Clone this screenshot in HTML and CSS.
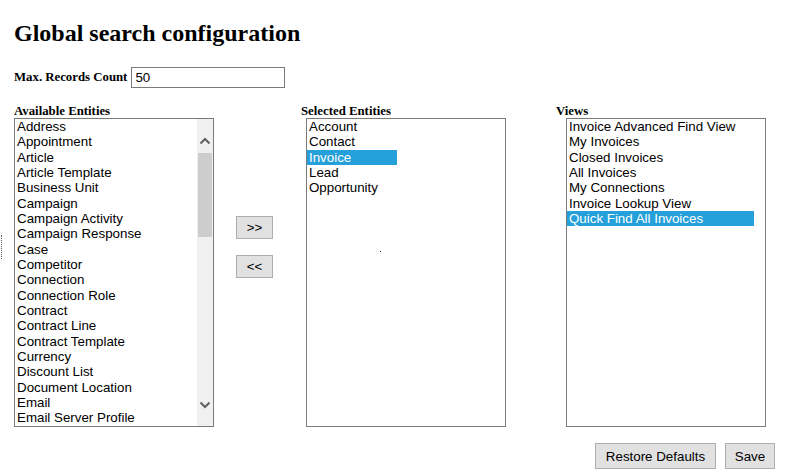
FILE: index.html
```html
<!DOCTYPE html>
<html>
<head>
<meta charset="utf-8">
<title>Global search configuration</title>
<link rel="stylesheet" href="styles.css">
</head>
<body>
<div class="focus-mark"></div>
<div class="page">
  <h1 class="title">Global search configuration</h1>
  <div class="count-row">
    <label class="field-label" for="maxcount">Max. Records Count</label>
    <input id="maxcount" class="text-input" type="text" value="50">
  </div>
  <div class="lists">
    <div class="col">
      <div class="caption">Available Entities</div>
      <div class="listbox listbox-scroll">
        <div class="items">
          <div class="item">Address</div>
          <div class="item">Appointment</div>
          <div class="item">Article</div>
          <div class="item">Article Template</div>
          <div class="item">Business Unit</div>
          <div class="item">Campaign</div>
          <div class="item">Campaign Activity</div>
          <div class="item">Campaign Response</div>
          <div class="item">Case</div>
          <div class="item">Competitor</div>
          <div class="item">Connection</div>
          <div class="item">Connection Role</div>
          <div class="item">Contract</div>
          <div class="item">Contract Line</div>
          <div class="item">Contract Template</div>
          <div class="item">Currency</div>
          <div class="item">Discount List</div>
          <div class="item">Document Location</div>
          <div class="item">Email</div>
          <div class="item">Email Server Profile</div>
        </div>
        <div class="scrollbar">
          <svg class="chev" width="12" height="14" viewBox="0 0 12 14"><polyline points="1.5,9.5 6,5 10.5,9.5" fill="none" stroke="#606060" stroke-width="2"/></svg>
          <div class="thumb"></div>
          <div class="track-fill"></div>
          <svg class="chev" width="12" height="14" viewBox="0 0 12 14"><polyline points="1.5,4.5 6,9 10.5,4.5" fill="none" stroke="#606060" stroke-width="2"/></svg>
        </div>
      </div>
    </div>
    <div class="movers">
      <button class="btn btn-move" type="button">&gt;&gt;</button>
      <button class="btn btn-move" type="button">&lt;&lt;</button>
    </div>
    <div class="col col-selected">
      <div class="caption">Selected Entities</div>
      <div class="listbox listbox-selected">
        <div class="items">
          <div class="item">Account</div>
          <div class="item">Contact</div>
          <div class="item item-selected item-w90">Invoice</div>
          <div class="item">Lead</div>
          <div class="item">Opportunity</div>
        </div>
        <span class="speck"></span>
      </div>
    </div>
    <div class="col col-views">
      <div class="caption">Views</div>
      <div class="listbox listbox-views">
        <div class="items">
          <div class="item">Invoice Advanced Find View</div>
          <div class="item">My Invoices</div>
          <div class="item">Closed Invoices</div>
          <div class="item">All Invoices</div>
          <div class="item">My Connections</div>
          <div class="item">Invoice Lookup View</div>
          <div class="item item-selected item-w187">Quick Find All Invoices</div>
        </div>
      </div>
    </div>
  </div>
  <div class="actions">
    <button class="btn btn-action btn-restore" type="button">Restore Defaults</button>
    <button class="btn btn-action btn-save" type="button">Save</button>
  </div>
</div>
</body>
</html>
```
FILE: styles.css
```css
html, body {
  margin: 0;
  padding: 0;
  background: #ffffff;
}

body {
  position: relative;
  width: 785px;
  height: 476px;
  overflow: hidden;
  font-family: "Liberation Serif", "Times New Roman", serif;
  color: #000;
}

.focus-mark {
  position: absolute;
  left: 1px;
  top: 235px;
  width: 0;
  height: 24px;
  border-left: 1px dotted #555;
}

.page {
  padding-left: 14px;
}

.title {
  margin: 20px 0 0 0;
  font-size: 24px;
  line-height: 27px;
  font-weight: bold;
}

.count-row {
  display: flex;
  align-items: center;
  margin-top: 20px;
  height: 21px;
}

.field-label {
  font-size: 12.8px;
  line-height: 15px;
  font-weight: bold;
  margin-right: 4px;
}

.text-input {
  box-sizing: border-box;
  width: 154px;
  height: 21px;
  margin: 0;
  padding: 0 3px;
  border: 1px solid #7a7a7a;
  font-family: "Liberation Sans", Arial, sans-serif;
  font-size: 13.33px;
  color: #000;
  outline: none;
}

.lists {
  display: flex;
  align-items: flex-start;
  margin-top: 16px;
}

.col {
  display: flex;
  flex-direction: column;
}

.caption {
  font-size: 12.8px;
  line-height: 14px;
  font-weight: bold;
}

.listbox {
  position: relative;
  box-sizing: border-box;
  width: 200px;
  height: 309px;
  border: 1px solid #7a7a7a;
  background: #fff;
  display: flex;
  font-family: "Liberation Sans", Arial, sans-serif;
  font-size: 13.33px;
  line-height: 15.33px;
}

.items {
  flex: 1;
  display: flex;
  flex-direction: column;
  align-items: flex-start;
  min-width: 0;
}

.item {
  padding-left: 2px;
  white-space: nowrap;
  color: #000;
  align-self: stretch;
}

.item-selected {
  background: #26a0da;
  color: #fff;
  align-self: flex-start;
  box-sizing: border-box;
}

.item-w90 { width: 90px; }
.item-w187 { width: 187px; }

.scrollbar {
  width: 16px;
  background: #f0f0f0;
  display: flex;
  flex-direction: column;
  align-items: center;
  padding-top: 15px;
  padding-bottom: 14px;
  box-sizing: border-box;
}

.chev {
  display: block;
  flex: none;
}

.thumb {
  width: 14px;
  height: 84px;
  margin-top: 5px;
  background: #cdcdcd;
  flex: none;
}

.track-fill {
  flex: 1;
}

.movers {
  display: flex;
  flex-direction: column;
  margin-left: 22px;
  padding-top: 112px;
  gap: 16px;
}

.btn {
  box-sizing: border-box;
  margin: 0;
  border: 1px solid #adadad;
  background: #e1e1e1;
  color: #000;
  font-family: "Liberation Sans", Arial, sans-serif;
  font-size: 13.33px;
  white-space: nowrap;
  cursor: default;
}

.btn-move {
  width: 37px;
  height: 23px;
  padding: 0;
}

.col-selected {
  margin-left: 28px;
}

.listbox-selected {
  margin-left: 5px;
}

.speck {
  position: absolute;
  left: 73px;
  top: 132px;
  width: 1px;
  height: 1px;
  background: #222;
}

.col-views {
  margin-left: 50px;
}

.listbox-views {
  margin-left: 10px;
}

.actions {
  display: flex;
  justify-content: flex-end;
  gap: 9px;
  margin-top: 16px;
  padding-right: 10px;
}

.btn-action {
  height: 26px;
  padding: 0;
}

.btn-restore {
  width: 121px;
}

.btn-save {
  width: 50px;
}
```
